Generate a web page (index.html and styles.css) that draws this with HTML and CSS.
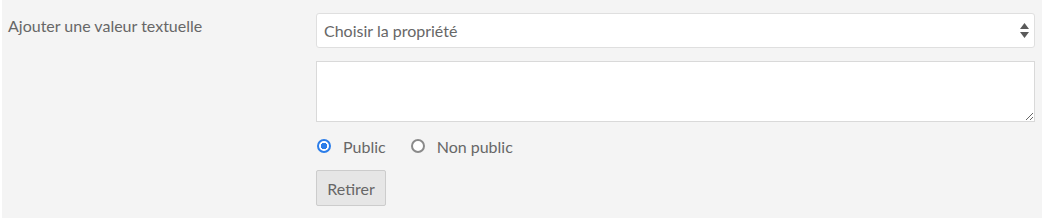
FILE: index.html
```html
<!DOCTYPE html>
<html lang="fr">
<head>
    <meta charset="UTF-8">
    <title>Ajouter une valeur textuelle</title>
    <link rel="stylesheet" href="styles.css">
</head>
<body>
    <div class="field-row">
        <label class="field-label">Ajouter une valeur textuelle</label>
        <div class="field-inputs">
            <div class="select-wrap">
                <select class="property-select">
                    <option>Choisir la propriété</option>
                </select>
                <svg class="select-arrows" width="9" height="15" viewBox="0 0 9 15">
                    <path d="M4.5 0 L9 6 L0 6 Z" fill="#5a5a5a"/>
                    <path d="M0 9 L9 9 L4.5 15 Z" fill="#5a5a5a"/>
                </svg>
            </div>
            <textarea class="value-input"></textarea>
            <div class="visibility">
                <label class="radio"><input type="radio" name="vis" checked><span>Public</span></label>
                <label class="radio"><input type="radio" name="vis"><span>Non public</span></label>
            </div>
            <div>
                <button class="remove-btn">Retirer</button>
            </div>
        </div>
    </div>
</body>
</html>
```

FILE: styles.css
```css
body {
    margin: 0;
    padding: 0 5px 0 2px;
    background: #fff;
    font-family: Lato, "Open Sans", sans-serif;
    font-size: 16px;
    color: #676767;
}
.field-row {
    display: flex;
    background: #f4f4f4;
    padding: 13px 7px 12px 6px;
    height: 193px;
}
.field-label {
    width: 308px;
    flex-shrink: 0;
    padding-top: 3px;
    line-height: 20px;
}
.field-inputs {
    flex: 1;
    display: flex;
    flex-direction: column;
}
.select-wrap {
    position: relative;
}
.property-select {
    width: 100%;
    height: 35px;
    appearance: none;
    -webkit-appearance: none;
    background: #fff;
    border: 1px solid #dfdfdf;
    border-radius: 3px;
    padding: 0 7px;
    font-family: inherit;
    font-size: 16px;
    color: #676767;
}
.select-arrows {
    position: absolute;
    right: 6px;
    top: 10px;
}
.value-input {
    display: block;
    margin-top: 13px;
    height: 62px;
    box-sizing: border-box;
    width: 100%;
    border: 1px solid #d9d9d9;
    background: #fff;
    border-radius: 0;
    resize: vertical;
}
.visibility {
    display: flex;
    gap: 24px;
    margin-top: 13px;
    height: 22px;
    align-items: center;
}
.radio {
    display: flex;
    align-items: center;
}
.radio input {
    appearance: none;
    -webkit-appearance: none;
    box-sizing: border-box;
    margin: 0 12px 0 1px;
    width: 14px;
    height: 14px;
    border: 2px solid #8a8a8a;
    border-radius: 50%;
    background: #fff;
}
.radio input:checked {
    border-color: #2b7de9;
    background: radial-gradient(circle, #2b7de9 0 3px, #fff 3.5px);
}
.remove-btn {
    margin-top: 13px;
    height: 36px;
    width: 70px;
    padding: 0;
    background: #e6e6e6;
    border: 1px solid #cccccc;
    border-radius: 2px;
    font-family: inherit;
    font-size: 16px;
    color: #676767;
}
```
